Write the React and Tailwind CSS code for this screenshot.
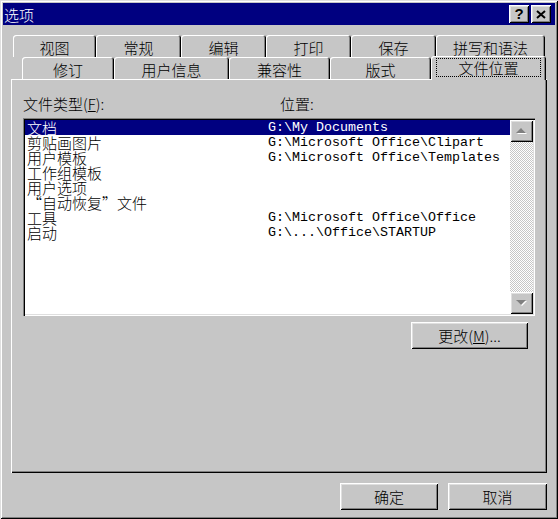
import React from "react";

const CJK = "font-['Noto_Sans_CJK_SC',sans-serif] font-light";
const MONO = "font-['Liberation_Mono',monospace] font-normal";

const raised =
  "shadow-[inset_1px_1px_0_#fff,inset_-1px_-1px_0_#000,inset_2px_2px_0_#dfdfdf,inset_-2px_-2px_0_#808080]";

const row1 = [
  { label: "视图", w: "w-[83px]" },
  { label: "常规", w: "w-[85px]" },
  { label: "编辑", w: "w-[85px]" },
  { label: "打印", w: "w-[85px]" },
  { label: "保存", w: "w-[85px]" },
  { label: "拼写和语法", w: "w-[109px]" },
];

const row2 = [
  { label: "修订", w: "w-[92px]" },
  { label: "用户信息", w: "w-[115px]" },
  { label: "兼容性", w: "w-[101px]" },
  { label: "版式", w: "w-[101px]" },
];

const rows = [
  { name: "文档", path: "G:\\My Documents", sel: true },
  { name: "剪贴画图片", path: "G:\\Microsoft Office\\Clipart" },
  { name: "用户模板", path: "G:\\Microsoft Office\\Templates" },
  { name: "工作组模板", path: "" },
  { name: "用户选项", path: "" },
  { name: "“自动恢复”文件", path: "" },
  { name: "工具", path: "G:\\Microsoft Office\\Office" },
  { name: "启动", path: "G:\\...\\Office\\STARTUP" },
];

function Tab({ label, w }) {
  return (
    <div
      className={`${w} h-[22px] shrink-0 rounded-t-[3px] bg-[#c6c6c6] shadow-[inset_1px_1px_0_#fff,inset_-1px_0_0_#000,inset_-2px_0_0_#808080] flex items-center justify-center pt-[2px] text-[15px] leading-[15px] text-black`}
    >
      {label}
    </div>
  );
}

function Arrow({ down }) {
  return (
    <svg width="11" height="7" viewBox="0 0 11 7">
      {down ? (
        <>
          <polygon points="1,1 11,1 6,6" fill="#fff" />
          <polygon points="0,0 10,0 5,5" fill="#808080" />
        </>
      ) : (
        <>
          <polygon points="1,6 11,6 6,1" fill="#fff" />
          <polygon points="0,5 10,5 5,0" fill="#808080" />
        </>
      )}
    </svg>
  );
}

function Button({ w, children }) {
  return (
    <div
      className={`${w} h-[27px] bg-[#c6c6c6] ${raised} flex items-center justify-center text-[15px] leading-[15px] text-black`}
    >
      {children}
    </div>
  );
}

export default function App() {
  return (
    <div
      className={`${CJK} w-[558px] h-[519px] bg-[#c6c6c6] shadow-[inset_1px_1px_0_#dfdfdf,inset_-1px_-1px_0_#000,inset_2px_2px_0_#fff,inset_-2px_-2px_0_#808080] p-[3px] flex flex-col`}
    >
      {/* Title bar */}
      <div className="h-[22px] bg-[#000080] flex items-center pl-[1px] pr-[4px]">
        <span className="text-white text-[15px] leading-[15px]">选项</span>
        <div className="ml-auto flex gap-[2px]">
          <div
            className={`w-[20px] h-[18px] bg-[#c6c6c6] ${raised} flex items-center justify-center font-['Liberation_Sans',sans-serif] font-bold text-[15px] leading-[15px] text-black pb-[1px]`}
          >
            ?
          </div>
          <div
            className={`w-[20px] h-[18px] bg-[#c6c6c6] ${raised} flex items-center justify-center`}
          >
            <svg width="10" height="9" viewBox="0 0 10 9">
              <path d="M1 1 L9 8 M9 1 L1 8" stroke="#000" strokeWidth="2" />
            </svg>
          </div>
        </div>
      </div>

      {/* Tabs row 1 */}
      <div className="mt-[10px] ml-[10px] flex">
        {row1.map((t) => (
          <Tab key={t.label} label={t.label} w={t.w} />
        ))}
      </div>

      {/* Tabs row 2 */}
      <div className="ml-[19px] flex h-[22px] items-start">
        {row2.map((t) => (
          <Tab key={t.label} label={t.label} w={t.w} />
        ))}
        <div className="relative z-10 -mt-[1px] w-[115px] h-[24px] shrink-0 rounded-t-[3px] bg-[#c6c6c6] shadow-[inset_1px_1px_0_#fff,inset_-1px_0_0_#000,inset_-2px_0_0_#808080] pt-[2px] px-[5px]">
          <div className="h-[19px] border border-dotted border-black flex items-center justify-center text-[15px] leading-[15px] text-black">
            文件位置
          </div>
        </div>
      </div>

      {/* Panel */}
      <div className="ml-[8px] w-[536px] h-[394px] shrink-0 bg-[#c6c6c6] shadow-[inset_1px_1px_0_#fff,inset_-1px_-1px_0_#000,inset_-2px_-2px_0_#808080] pt-[17px] pl-[12px] flex flex-col">
        <div className="flex h-[15px] text-[15px] leading-[15px] text-black">
          <span className="w-[257px]">
            文件类型(<u>F</u>):
          </span>
          <span>位置:</span>
        </div>

        <div className="mt-[7px] w-[512px] h-[198px] bg-white shadow-[inset_1px_1px_0_#808080,inset_2px_2px_0_#000,inset_-1px_-1px_0_#fff,inset_-2px_-2px_0_#dfdfdf] p-[2px] flex">
          <div className="flex-1 flex flex-col">
            {rows.map((r) => (
              <div
                key={r.name}
                className={`h-[15px] flex items-center ${
                  r.sel ? "bg-[#000080] text-white" : "text-black"
                }`}
              >
                <span className="w-[243px] pl-[2px] text-[15px] leading-[15px] whitespace-nowrap">
                  {r.name}
                </span>
                <span className={`${MONO} text-[13.33px] leading-[15px] whitespace-nowrap`}>
                  {r.path}
                </span>
              </div>
            ))}
          </div>
          <div className="w-[23px] flex flex-col">
            <div className={`h-[22px] bg-[#c6c6c6] ${raised} flex items-center justify-center`}>
              <Arrow />
            </div>
            <div className="flex-1 bg-[repeating-conic-gradient(#fff_0_25%,#c6c6c6_0_50%)] bg-[length:2px_2px]" />
            <div className={`h-[22px] bg-[#c6c6c6] ${raised} flex items-center justify-center`}>
              <Arrow down />
            </div>
          </div>
        </div>

        <div className="mt-[6px] flex justify-end mr-[19px]">
          <Button w="w-[117px]">
            更改(<u>M</u>)...
          </Button>
        </div>
      </div>

      {/* Bottom buttons */}
      <div className="mt-[10px] flex justify-end gap-[10px] pr-[8px]">
        <Button w="w-[98px]">确定</Button>
        <Button w="w-[99px]">取消</Button>
      </div>
    </div>
  );
}
